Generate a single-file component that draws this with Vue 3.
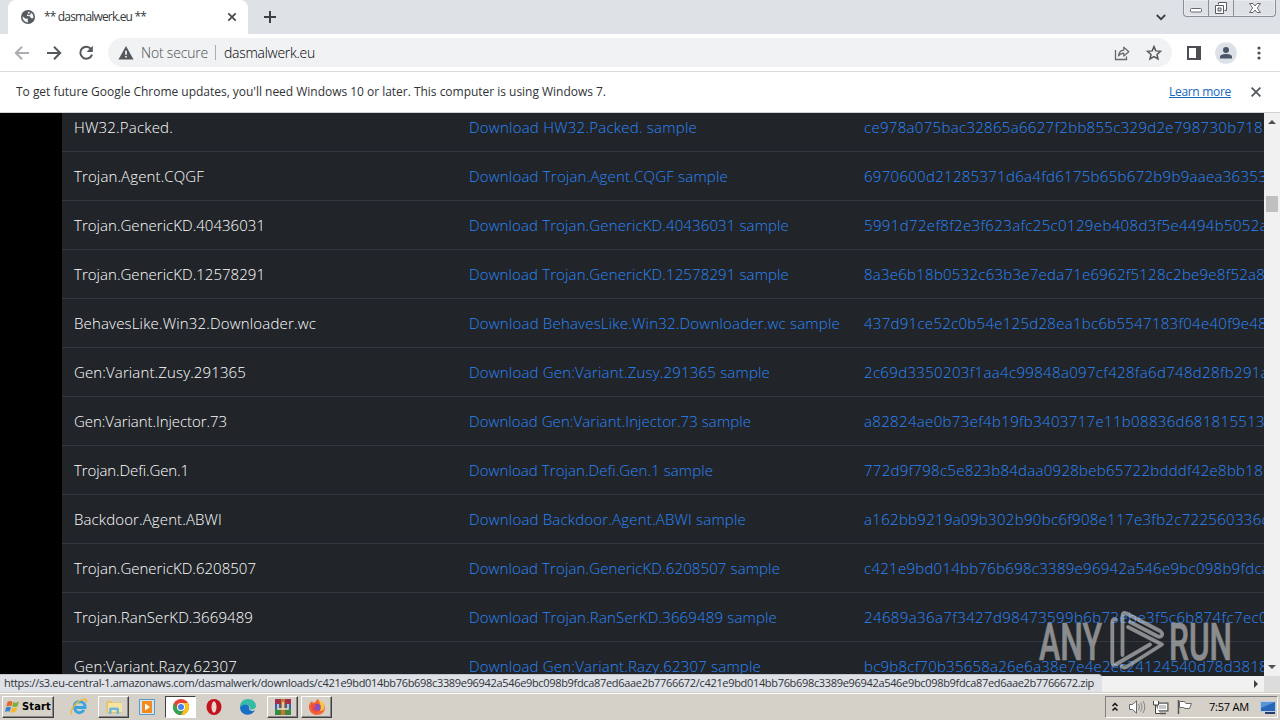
<script setup>
const LINK_EXTRA = 129

// name, rendered width of the name, visible part of the hash, its width
const samples = [
  { name: 'HW32.Packed.', w: 99, hash: 'ce978a075bac32865a6627f2bb855c329d2e798730b718', hw: 399 },
  { name: 'Trojan.Agent.CQGF', w: 130, hash: '6970600d21285371d6a4fd6175b65b672b9b9aaea36353', hw: 403 },
  { name: 'Trojan.GenericKD.40436031', w: 191, hash: '5991d72ef8f2e3f623afc25c0129eb408d3f5e4494b5052a', hw: 404 },
  { name: 'Trojan.GenericKD.12578291', w: 191, hash: '8a3e6b18b0532c63b3e7eda71e6962f5128c2be9e8f52a8', hw: 401 },
  { name: 'BehavesLike.Win32.Downloader.wc', w: 242, hash: '437d91ce52c0b54e125d28ea1bc6b5547183f04e40f9e48', hw: 403 },
  { name: 'Gen:Variant.Zusy.291365', w: 172, hash: '2c69d3350203f1aa4c99848a097cf428fa6d748d28fb291a', hw: 405 },
  { name: 'Gen:Variant.Injector.73', w: 153, hash: 'a82824ae0b73ef4b19fb3403717e11b08836d681815513', hw: 401 },
  { name: 'Trojan.Defi.Gen.1', w: 115, hash: '772d9f798c5e823b84daa0928beb65722bdddf42e8bb18', hw: 399 },
  { name: 'Backdoor.Agent.ABWI', w: 148, hash: 'a162bb9219a09b302b90bc6f908e117e3fb2c722560336c', hw: 405 },
  { name: 'Trojan.GenericKD.6208507', w: 182, hash: 'c421e9bd014bb76b698c3389e96942a546e9bc098b9fdca', hw: 406 },
  { name: 'Trojan.RanSerKD.3669489', w: 179, hash: '24689a36a7f3427d98473599b6b73ebe3f5c6b874fc7ec0', hw: 404 },
  { name: 'Gen:Variant.Razy.62307', w: 163, hash: 'bc9b8cf70b35658a26e6a38e7e4e2ec24124540d78d3818', hw: 404 },
]

const file = 'c421e9bd014bb76b698c3389e96942a546e9bc098b9fdca87ed6aae2b7766672'
const status = `https://s3.eu-central-1.amazonaws.com/dasmalwerk/downloads/${file}/${file}.zip`

// spreads the letters so the text takes the given width
const vFit = {
  mounted(el, { value }) {
    const natural = el.getBoundingClientRect().width
    el.style.letterSpacing = (value - natural) / el.textContent.length + 'px'
  },
}
</script>

<template>
<div class="screen">
  <header class="tabstrip">
    <div class="tab">
      <svg class="globe" width="14" height="14" viewBox="0 0 14 14">
        <circle cx="7" cy="7" r="7" fill="#55585c" />
        <path d="M1.6 6.2 4.4 8.4 7.2 8.8 6.6 10.6 7.3 12.4A5.5 5.5 0 0 1 1.6 6.2ZM6 1.7 8.9 1.9 8.2 4 6.2 4.4 5.8 6 8.8 6.3 10 8.2 12.3 8.3A5.4 5.4 0 0 0 10.3 2.8L9 5 7 5.2 7.6 3Z" fill="#f4f5f6" />
      </svg>
      <span class="tab-title"><span v-fit="102">** dasmalwerk.eu **</span></span>
      <svg class="tab-close" width="10" height="10" viewBox="0 0 10 10"><path d="M1.3 1.3 8.7 8.7M8.7 1.3 1.3 8.7" stroke="#45494d" stroke-width="1.7" /></svg>
    </div>
    <svg class="plus" width="12" height="12" viewBox="0 0 12 12"><path d="M6 0V12M0 6H12" stroke="#3c4043" stroke-width="2" /></svg>
    <svg class="chevron" width="10" height="7" viewBox="0 0 10 7"><path d="M.8 1 5 5.2 9.2 1" fill="none" stroke="#3c4043" stroke-width="1.8" /></svg>
    <div class="win-controls">
      <span class="wc"><svg width="14" height="14" viewBox="0 0 14 14"><rect x="1.5" y="7.5" width="11" height="3.5" rx="1" fill="#fff" stroke="#656a72" /></svg></span>
      <span class="wc"><svg width="14" height="14" viewBox="0 0 14 14"><path d="M4.5 3.5V1.5H12.5V9.5H10.5" fill="#fff" stroke="#555a63" /><path d="M1.5 4.5H9.5V12.5H1.5ZM4 7H7V10H4Z" fill="#fff" fill-rule="evenodd" stroke="#555a63" /></svg></span>
      <span class="wc close"><svg width="14" height="14" viewBox="0 0 14 14"><path d="M1.5 2.5H5L7 5 9 2.5H12.5L9.3 7 12.5 11.5H9L7 9 5 11.5H1.5L4.7 7Z" fill="#fff" stroke="#656a72" /></svg></span>
    </div>
  </header>

  <div class="toolbar">
    <svg class="nav" width="16" height="16" viewBox="0 0 16 16"><path d="M15 8H2M8 1.8 1.8 8 8 14.2" fill="none" stroke="#aaadb1" stroke-width="2" /></svg>
    <svg class="nav" width="16" height="16" viewBox="0 0 16 16"><path d="M1 8H14M8 1.8 14.2 8 8 14.2" fill="none" stroke="#55595e" stroke-width="2" /></svg>
    <svg class="nav" width="16" height="16" viewBox="0 0 16 16"><path d="M13.3 4.3A6 6 0 1 0 14 9.6" fill="none" stroke="#55595e" stroke-width="2" /><path d="M14.8 .8V7H8.6Z" fill="#55595e" /></svg>
    <div class="omnibox">
      <svg class="warn" width="16" height="14" viewBox="0 0 16 14"><path d="M8 0 15.5 13.5H.5Z" fill="#54585d" /><path d="M8 4.8V8.8M8 10V11.6" stroke="#fff" stroke-width="1.6" /></svg>
      <span class="insecure"><span v-fit="67">Not secure</span></span>
      <span class="divider"></span>
      <span class="url"><span v-fit="91">dasmalwerk.eu</span></span>
      <svg class="share" width="16" height="16" viewBox="0 0 16 16"><path d="M1.5 5V14.5H12.5V11.5" fill="none" stroke="#65696e" stroke-width="1.3" /><path d="M4.5 11C4.8 7.2 7 5.3 9.8 5.1V2.2L14.8 6.7 9.8 11V8.1C7.6 8.1 5.8 9 4.5 11Z" fill="none" stroke="#65696e" stroke-width="1.2" stroke-linejoin="round" /></svg>
      <svg class="star" width="16" height="16" viewBox="0 0 16 16"><path d="M8 1.6 9.8 5.9 14.5 6.3 11 9.4 12 14 8 11.6 4 14 5 9.4 1.5 6.3 6.2 5.9Z" fill="none" stroke="#54585d" stroke-width="1.5" /></svg>
    </div>
    <svg class="panel" width="14" height="14" viewBox="0 0 14 14"><rect x="1" y="1" width="12" height="12" fill="none" stroke="#4b4f54" stroke-width="2" /><path d="M9 1H13V13H9Z" fill="#4b4f54" /></svg>
    <svg class="avatar" width="22" height="22" viewBox="0 0 22 22"><circle cx="11" cy="11" r="10.8" fill="#dce0e7" /><circle cx="11" cy="8" r="3" fill="#4b5569" /><path d="M5 16.5V15C5 12.8 8.3 12 11 12S17 12.8 17 15V16.5Z" fill="#4b5569" /></svg>
    <svg class="menu" width="4" height="14" viewBox="0 0 4 14"><g fill="#4b4f54"><circle cx="2" cy="2" r="1.6" /><circle cx="2" cy="7" r="1.6" /><circle cx="2" cy="12" r="1.6" /></g></svg>
  </div>

  <div class="infobar">
    <span class="info-text"><span v-fit="590">To get future Google Chrome updates, you'll need Windows 10 or later. This computer is using Windows 7.</span></span>
    <a class="learn"><span v-fit="62">Learn more</span></a>
    <svg width="10" height="10" viewBox="0 0 10 10"><path d="M.6 .6 9.4 9.4M9.4 .6 .6 9.4" stroke="#54585d" stroke-width="1.8" /></svg>
  </div>

  <main class="viewport">
    <div class="page">
      <div class="table">
        <div v-for="s in samples" :key="s.name" class="row">
          <div class="cell"><span v-fit="s.w">{{ s.name }}</span></div>
          <div class="cell"><a v-fit="s.w + LINK_EXTRA">Download {{ s.name }} sample</a></div>
          <div class="cell"><a v-fit="s.hw">{{ s.hash }}</a></div>
        </div>
      </div>
    </div>
    <div class="vscroll">
      <svg width="8" height="4" viewBox="0 0 8 4"><path d="M0 4 4 0 8 4Z" fill="#505050" /></svg>
      <div class="thumb"></div>
      <svg class="down" width="8" height="4" viewBox="0 0 8 4"><path d="M0 0H8L4 4Z" fill="#505050" /></svg>
    </div>
  </main>

  <div class="hscroll">
    <svg width="4" height="8" viewBox="0 0 4 8"><path d="M0 0 4 4 0 8Z" fill="#404040" /></svg>
    <div class="corner"></div>
  </div>
  <div class="status"><span v-fit="1090">{{ status }}</span></div>

  <svg class="watermark" width="200" height="66" viewBox="0 0 200 66">
    <g fill="#dcdddd" stroke="#dcdddd" stroke-width=".7" font-family="Roboto, sans-serif" font-size="51" font-weight="500">
      <text x="3" y="50.5" textLength="63" lengthAdjust="spacingAndGlyphs">ANY</text>
      <text x="133" y="50.5" textLength="63" lengthAdjust="spacingAndGlyphs">RUN</text>
    </g>
    <g fill="none" stroke="#dcdddd" stroke-width="3.8" stroke-linecap="round" stroke-linejoin="round">
      <path d="M79.500 10.500Q76.300 9.500 76.300 14V53Q76.300 57.500 80.500 55L114 35.500" />
      <path d="M86.500 46V7Q86.500 2.500 90.500 4.500L124 22Q127.500 24.500 125.500 27 124 28.500 121 27L94 13" />
      <path d="M92 18 126 35.500 92 57Q88 60 85.500 57" />
    </g>
  </svg>

  <footer class="taskbar">
    <div class="start">
      <svg width="15" height="14" viewBox="0 0 15 14">
        <path d="M2.500 2Q5 .3 7.500 1.800L6.300 6.300Q4 5 1.200 6.500Z" fill="#e5682e" />
        <path d="M8.300 2Q11 3.500 14 1.500L12.700 6Q10 7.700 7.200 6.500Z" fill="#7dad3a" />
        <path d="M1 7.500Q3.500 6 6 7.300L4.800 11.600Q2.500 10.500 0 12Z" fill="#3c83cc" />
        <path d="M7 7.500Q9.700 8.600 12.400 7L11 11.500Q8.500 13.200 5.700 11.900Z" fill="#f4ba2c" />
      </svg>
      <b v-fit="29">Start</b>
    </div>
    <div class="task ie">
      <svg width="20" height="20" viewBox="0 0 20 20"><path d="M15 13Q12.500 16.500 9 15.500 5.800 14.500 5.600 10.500H16Q16.200 4.700 10.500 4.700 5 5 4.900 10.500" fill="none" stroke="#38a5e0" stroke-width="2.800" /><path d="M3 17.500C0 15 5 7 11 3.700 16 1 18.500 2 17 5.500" fill="none" stroke="#edb933" stroke-width="1.500" /></svg>
    </div>
    <div class="task raised">
      <svg width="18" height="18" viewBox="0 0 18 18"><path d="M1.500 3H6L7.500 4.500H16.500V15H1.500Z" fill="#e5c263" /><path d="M3 5H17V14H3Z" fill="#f8e4a0" /><path d="M4 16V11Q4 9.500 6 9.500H12Q14 9.500 14 11V16H11.500V12H6.500V16Z" fill="#6cb7df" /></svg>
    </div>
    <div class="task player">
      <svg width="18" height="18" viewBox="0 0 18 18"><path d="M1.500 1.500H16.500V16.500H1.500Z" fill="#d1e6f4" stroke="#5b98c4" /><rect x="4" y="3" width="10" height="12" fill="#f28a1c" /><path d="M7 5.500 12 9 7 12.500Z" fill="#fff" /></svg>
    </div>
    <div class="task pressed">
      <svg width="18" height="18" viewBox="0 0 18 18"><circle cx="9" cy="9" r="8" fill="#e64334" /><path d="M2 5A8 8 0 0 0 9 17L12.500 11 5.500 11Z" fill="#34a450" /><path d="M9 17A8 8 0 0 0 16 5H9L12.500 11Z" fill="#fbc116" /><circle cx="9" cy="9" r="4" fill="#fff" /><circle cx="9" cy="9" r="3" fill="#4283ec" /></svg>
    </div>
    <div class="task opera">
      <svg width="18" height="18" viewBox="0 0 18 18"><ellipse cx="9" cy="9" rx="7.500" ry="8" fill="#c3131d" /><ellipse cx="9" cy="9" rx="2.500" ry="5.800" fill="#e7d9d1" /></svg>
    </div>
    <div class="task edge">
      <svg width="18" height="18" viewBox="0 0 18 18"><path d="M1 9C1 4 4.500 1 9 1 14 1 17 4.500 17 8 17 11 13.500 12 10.500 11 12 7 6 5 1 9Z" fill="#35bca5" /><path d="M1 9C5 4.500 11 6.500 10 10 10 12.500 13 13.500 16 12.500 12 19 1 18 1 9Z" fill="#1870c4" /></svg>
    </div>
    <div class="task raised">
      <svg width="18" height="18" viewBox="0 0 18 18"><rect x="1" y="1" width="16" height="5" fill="#a02f49" /><rect x="1" y="6" width="16" height="5" fill="#3c61a5" /><rect x="1" y="11" width="16" height="6" fill="#398b43" /><path d="M7 1H11V17H7Z" fill="#c6792c" /><path d="M4 6V11H14V6M9 4V11" fill="none" stroke="#eee2ce" stroke-width="1.500" /></svg>
    </div>
    <div class="task raised firefox">
      <svg width="18" height="18" viewBox="0 0 18 18"><path d="M9 17A8 8 0 0 1 2 5L4 3 5 5Q8 4 9.500 1 12 3 12.500 5L14 4Q17 7 17 10 16 17 9 17Z" fill="#f46431" /><path d="M10 1Q16 4 16.500 9 16 13 12 13 14 8 10 1Z" fill="#fbc43c" /><circle cx="9" cy="9.500" r="3.700" fill="#864fc0" /><path d="M3 7Q6 5 8.500 8L5.500 10Q7 13.500 12 12 9 16 5 13.500 3 11 3 7Z" fill="#f0493d" /></svg>
    </div>

    <div class="tray">
      <svg width="8" height="10" viewBox="0 0 8 10"><path d="M1.500 4 4 1.500 6.500 4M1.500 8.500 4 6 6.500 8.500" fill="none" stroke="#111" stroke-width="1.500" /></svg>
      <svg class="speaker" width="18" height="16" viewBox="0 0 18 16"><path d="M1.500 5.500H4.500L8.500 1.800V14.200L4.500 10.500H1.500Z" fill="#fff" stroke="#66686a" /><path d="M10.500 5Q12.500 8 10.500 11M12.700 3.500Q15.500 8 12.700 12.500M15 2Q18.500 8 15 14" fill="none" stroke="#85878a" /></svg>
      <svg class="net" width="17" height="16" viewBox="0 0 17 16"><rect x="5" y="4" width="11" height="8" fill="#aaa" stroke="#555" /><rect x="6.500" y="5.500" width="8" height="5" fill="#c6c6c6" stroke="#fff" /><path d="M8 14.500H14" stroke="#555" stroke-width="1.500" /><path d="M1.500 2V6H6.500V2M3.500 6V14.500H8" fill="#fff" stroke="#444" /></svg>
      <svg class="flag" width="17" height="16" viewBox="0 0 17 16"><path d="M2.500 1V15" stroke="#555" stroke-width="1.500" /><path d="M3.500 2.500H8.500L10 4.500H15.500L13.500 9.500H9L7.500 8.500H3.500Z" fill="#fff" stroke="#66686a" /></svg>
      <span class="clock"><span v-fit="40">7:57 AM</span></span>
      <svg class="desktop" width="16" height="14" viewBox="0 0 16 14"><path d="M.5 1.500H15.500V11.500H.5Z" fill="#2767b9" stroke="#becbdd" /><path d="M1 2H15L1 8Z" fill="#5794d9" /><path d="M5 13H15" stroke="#243e6b" stroke-width="2" /></svg>
    </div>
  </footer>
</div>
</template>

<style>
html, body { margin: 0; overflow: hidden; }
</style>

<style scoped>
.screen {
  position: relative;
  width: 1280px; height: 720px;
  display: flex; flex-direction: column;
  overflow: hidden;
  background: #fff;
  font-family: "Open Sans", "Noto Sans", sans-serif;
  font-size: 12px;
  white-space: nowrap;
}
svg { display: block; flex: none; }

.tabstrip { display: flex; height: 34px; flex: none; background: #dee1e6; padding-left: 8px; }
.tab {
  display: flex; align-items: center;
  width: 240px; height: 34px;
  box-sizing: border-box;
  background: #fff;
  border-radius: 8px 8px 0 0;
  padding: 0 11px 0 13px;
}
.tab-title { flex: 1; margin-left: 9px; color: #35383b; line-height: 16px; }
.plus { margin: 11px 0 0 16px; }
.chevron { margin: 14px 0 0 auto; }
.win-controls {
  display: flex;
  width: 91px; height: 16px;
  margin: 0 4px 0 17px;
  border: 1px solid #8c9098; border-top: 0;
  border-radius: 0 0 4px 4px;
  box-shadow: inset 0 0 0 1px #e9ebef;
}
.wc { display: flex; justify-content: center; align-items: center; width: 24px; border-right: 1px solid #8c9098; }
.wc.close { flex: 1; border-right: 0; }

.toolbar { display: flex; align-items: center; height: 37px; flex: none; border-bottom: 1px solid #d9dadd; padding-left: 14px; }
.nav { margin-right: 16px; }
.omnibox {
  display: flex; align-items: center;
  width: 1064px; height: 29px;
  box-sizing: border-box;
  margin-left: -2px;
  border-radius: 15px;
  background: #f0f2f4;
  padding: 0 10px;
}
.insecure { margin-left: 7px; width: 67px; font-size: 14px; font-weight: 300; color: #4a4e53; }
.divider { width: 1px; height: 15px; background: #aaadb1; margin: 0 8px 0 7px; }
.url { flex: 1; font-size: 14px; font-weight: 300; color: #000; }
.share { margin-right: 16px; }
.panel { margin-left: 15px; }
.avatar { margin-left: 14px; }
.menu { margin-left: 20px; }

.infobar { display: flex; align-items: center; height: 40px; flex: none; padding: 0 19px 0 16px; border-bottom: 1px solid #d0d2d5; }
.info-text { flex: 1; color: #303336; padding-bottom: 2px; }
.learn { color: #1767c0; text-decoration: underline; margin-right: 20px; padding-bottom: 2px; }

.viewport { display: flex; height: 563px; flex: none; }
.page { width: 1264px; background: #000; padding-left: 62px; box-sizing: border-box; overflow: hidden; }
.table { background: #212529; margin-top: -10px; }
.row {
  display: grid; grid-template-columns: 395px 395px 412px;
  height: 49px; box-sizing: border-box;
  align-items: center;
  border-bottom: 1px solid #32383e;
}
.cell { padding-left: 12px; font-size: 15px; font-weight: 300; line-height: 24px; color: #fff; overflow: hidden; }
.cell a { color: #2a86fa; }

.vscroll { width: 16px; display: flex; flex-direction: column; align-items: center; background: #f1f1f1; padding-top: 7px; box-sizing: border-box; }
.thumb { width: 12px; height: 16px; background: #c1c1c1; margin-top: 72px; }
.down { margin: auto 0 7px; }
.hscroll { display: flex; align-items: center; justify-content: flex-end; height: 16px; flex: none; background: #f1f1f1; }
.corner { width: 16px; height: 16px; margin-left: 6px; background: #dcdcdc; }
.status {
  position: absolute; left: 0; top: 674px;
  width: 1102px; height: 18px;
  box-sizing: border-box;
  padding-left: 4px;
  background: #dee1e6;
  border-top: 1px solid #c2c5ca;
  border-radius: 0 4px 0 0;
  font-size: 11px; line-height: 16px; color: #303437;
}
.watermark { position: absolute; left: 1036px; top: 609px; opacity: .56; }

.taskbar {
  display: flex; align-items: center;
  height: 28px; box-sizing: border-box; flex: none;
  background: #d5d0c8;
  border-top: 1px solid #d5d0c8;
  box-shadow: inset 0 1px #fff;
  padding: 1px 2px;
}
.start, .raised { border: 1px solid; border-color: #fff #404040 #404040 #fff; box-shadow: inset -1px -1px #888; }
.start {
  display: flex; align-items: center; gap: 2px;
  width: 52px; height: 22px; box-sizing: border-box;
  padding-left: 2px; margin-right: 8px;
  font-family: "DejaVu Sans Condensed", "DejaVu Sans", sans-serif;
  font-size: 11px; color: #000;
}
.task { display: flex; align-items: center; justify-content: center; width: 31px; height: 22px; box-sizing: border-box; margin-right: 3px; }
.player, .opera, .edge { position: relative; left: -1px; }
.pressed { background: #fff; border: 1px solid; border-color: #404040 #fff #fff #404040; margin-left: -1px; }
.ie { width: 33px; }
.tray {
  display: flex; align-items: center;
  width: 173px; height: 22px; box-sizing: border-box;
  margin-left: auto;
  border: 1px solid; border-color: #808080 #fff #fff #808080;
  padding-left: 5px;
}
.speaker { margin-left: 9px; }
.net { margin-left: 6px; }
.flag { margin-left: 7px; }
.clock { margin-left: 16px; width: 40px; font-size: 11px; color: #000; }
.desktop { margin-left: 11px; }
</style>
